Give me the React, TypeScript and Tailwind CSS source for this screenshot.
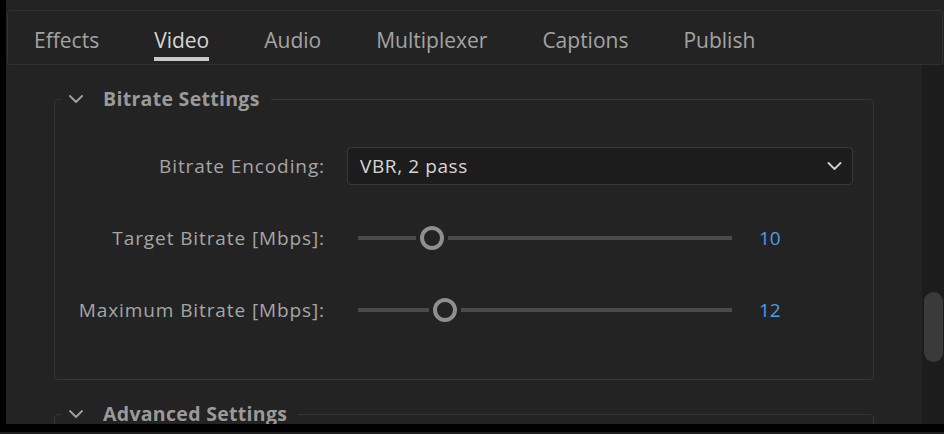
import type { ReactNode } from "react";

const TABS = ["Effects", "Video", "Audio", "Multiplexer", "Captions", "Publish"];

function Chevron({ className }: { className?: string }) {
  return (
    <svg viewBox="0 0 14 8" className={className} fill="none">
      <polyline
        points="1,1 7,7 13,1"
        stroke="currentColor"
        strokeWidth="1.8"
        strokeLinecap="round"
        strokeLinejoin="round"
      />
    </svg>
  );
}

function Section({ title, children }: { title: string; children?: ReactNode }) {
  return (
    <fieldset className="mx-[48px] rounded-[4px] border border-[#353535] p-0">
      <legend className="ml-[6px] flex items-center pl-[8px] pr-[11px] leading-[24px]">
        <Chevron className="h-[8px] w-[14px] text-[#a0a0a0]" />
        <span className="ml-[20px] text-[19.5px] font-bold tracking-[0.3px] text-[#9a9a9a]">{title}</span>
      </legend>
      {children}
    </fieldset>
  );
}

function Slider({ left, value }: { left: number; value: string }) {
  return (
    <div className="flex h-[38px] items-center">
      <div className="ml-[11px] flex w-[374px] items-center">
        <div className="h-[4px] bg-[#4a4a4a]" style={{ width: left }} />
        <div className="mx-[4px] h-[24px] w-[24px] shrink-0 rounded-full border-[4px] border-[#8f8f8f] bg-[#232323]" />
        <div className="h-[4px] flex-1 bg-[#4a4a4a]" />
      </div>
      <span className="ml-[27px] tracking-normal text-[#4c9de8]">{value}</span>
    </div>
  );
}

export default function App() {
  return (
    <div className="h-[434px] w-[944px] overflow-hidden bg-black font-['Open_Sans',sans-serif]">
      <div className="ml-[6px] flex h-[424px] flex-col bg-[#232323]">
        <div className="pt-[10px] pl-[1px] pr-[1px]">
          <div className="flex h-[55px] gap-[55px] rounded-[3px] border border-[#303030] pl-[26px]">
            {TABS.map((t) => (
              <div key={t} className="flex flex-col pt-[17px]">
                <span
                  className={`text-[21px] leading-[24px] ${t === "Video" ? "text-[#d6d6d6]" : "text-[#a3a3a3]"}`}
                >
                  {t}
                </span>
                <div className={`mt-[5px] h-[4px] ${t === "Video" ? "bg-[#c9c9c9]" : ""}`} />
              </div>
            ))}
          </div>
        </div>

        <div className="flex min-h-0 flex-1">
          <div className="flex-1 overflow-hidden pt-[22px]">
            <Section title="Bitrate Settings">
              <div className="grid grid-cols-[270px_1fr] items-center gap-x-[22px] gap-y-[34px] pt-[36px] pr-[20px] pb-[50px] text-[19px] text-[#a6a6a6]">
                <span className="text-right tracking-[0.9px]">Bitrate Encoding:</span>
                <div className="flex h-[38px] items-center justify-between rounded-[4px] border border-[#383838] bg-[#1c1c1c] pl-[12px] pr-[10px]">
                  <span className="tracking-[0.6px] text-[#d6d6d6]">VBR, 2 pass</span>
                  <Chevron className="h-[8px] w-[15px] text-[#cfcfcf]" />
                </div>
                <span className="text-right tracking-[0.9px]">Target Bitrate [Mbps]:</span>
                <Slider left={58} value="10" />
                <span className="text-right tracking-[0.9px]">Maximum Bitrate [Mbps]:</span>
                <Slider left={71} value="12" />
              </div>
            </Section>
            <div className="h-[22px]" />
            <Section title="Advanced Settings">
              <div className="h-[80px]" />
            </Section>
          </div>
          <div className="w-[22px] shrink-0 bg-[#1c1c1c] pt-[227px] pl-[2px] pr-[1px]">
            <div className="h-[70px] rounded-full bg-[#3a3a3a]" />
          </div>
        </div>
      </div>
      <div className="h-[8px]" />
      <div className="h-[2px] bg-[#1f1f1f]" />
    </div>
  );
}
